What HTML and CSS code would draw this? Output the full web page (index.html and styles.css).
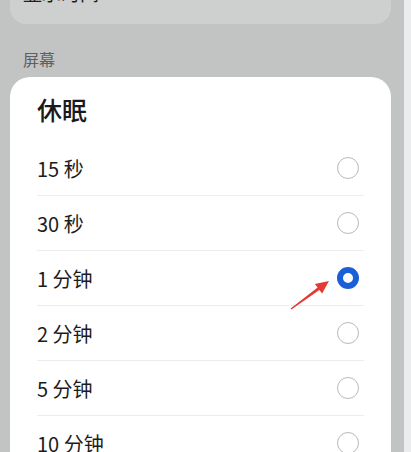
FILE: index.html
```html
<!DOCTYPE html>
<html lang="zh">
<head>
<meta charset="utf-8">
<link rel="stylesheet" href="styles.css">
</head>
<body>
<div class="page">
  <main class="main">
    <div class="top-card"><span class="top-text">显示时间</span></div>
    <div class="section-label">屏幕</div>
    <div class="card">
      <div class="card-title">休眠</div>
      <div class="row"><span class="row-text">15 秒</span><span class="radio"></span></div>
      <div class="row"><span class="row-text">30 秒</span><span class="radio"></span></div>
      <div class="row"><span class="row-text">1 分钟</span><span class="radio checked"></span></div>
      <div class="row"><span class="row-text">2 分钟</span><span class="radio"></span></div>
      <div class="row"><span class="row-text">5 分钟</span><span class="radio"></span></div>
      <div class="row"><span class="row-text">10 分钟</span><span class="radio"></span></div>
    </div>
  </main>
  <div class="side-strip"></div>
</div>
<svg class="arrow" viewBox="0 0 411 452" width="411" height="452">
  <polygon fill="#e53a33" points="329,281 322.1,293.5 319.4,289.9 291.4,309.5 290.6,308.5 317.6,287.5 314.9,283.9"/>
</svg>
</body>
</html>
```
FILE: styles.css
```css
html, body {
  margin: 0;
  padding: 0;
}
body {
  width: 411px;
  height: 452px;
  overflow: hidden;
  position: relative;
  font-family: "Noto Sans CJK SC", "Noto Sans", sans-serif;
  background: #c2c3c3;
}
.page {
  display: flex;
  height: 452px;
}
.main {
  flex: 1;
  padding: 0 13px 0 10px;
  display: flex;
  flex-direction: column;
}
.main > * {
  flex-shrink: 0;
}
.side-strip {
  width: 7px;
  background: #eaecee;
}
.top-card {
  margin-top: -40px;
  height: 64px;
  background: #cecfcf;
  border-radius: 16px;
  display: flex;
  align-items: center;
  padding-left: 13px;
  box-sizing: border-box;
}
.top-text {
  font-size: 19px;
  color: #1e1e1e;
  position: relative;
  top: 0;
}
.section-label {
  font-size: 16px;
  line-height: 22px;
  color: #5e5f5f;
  padding-left: 13px;
  margin-top: 24px;
}
.card {
  margin-top: 7px;
  background: #ffffff;
  border-radius: 20px;
  padding: 0 27px;
}
.card-title {
  font-size: 25px;
  font-weight: 500;
  line-height: 28px;
  color: #1a1a1a;
  padding-top: 18px;
  padding-bottom: 18px;
}
.row {
  height: 55px;
  display: flex;
  align-items: center;
  justify-content: space-between;
  border-bottom: 1px solid #ededed;
  box-sizing: border-box;
}
.row-text {
  font-size: 20px;
  color: #1c1c1c;
}
.radio {
  width: 22px;
  height: 22px;
  box-sizing: border-box;
  border: 1.5px solid #b9b9b9;
  border-radius: 50%;
  margin-right: 5px;
}
.radio.checked {
  border: 6px solid #1b5fd8;
}
.arrow {
  position: absolute;
  left: 0;
  top: 0;
  pointer-events: none;
}
```
